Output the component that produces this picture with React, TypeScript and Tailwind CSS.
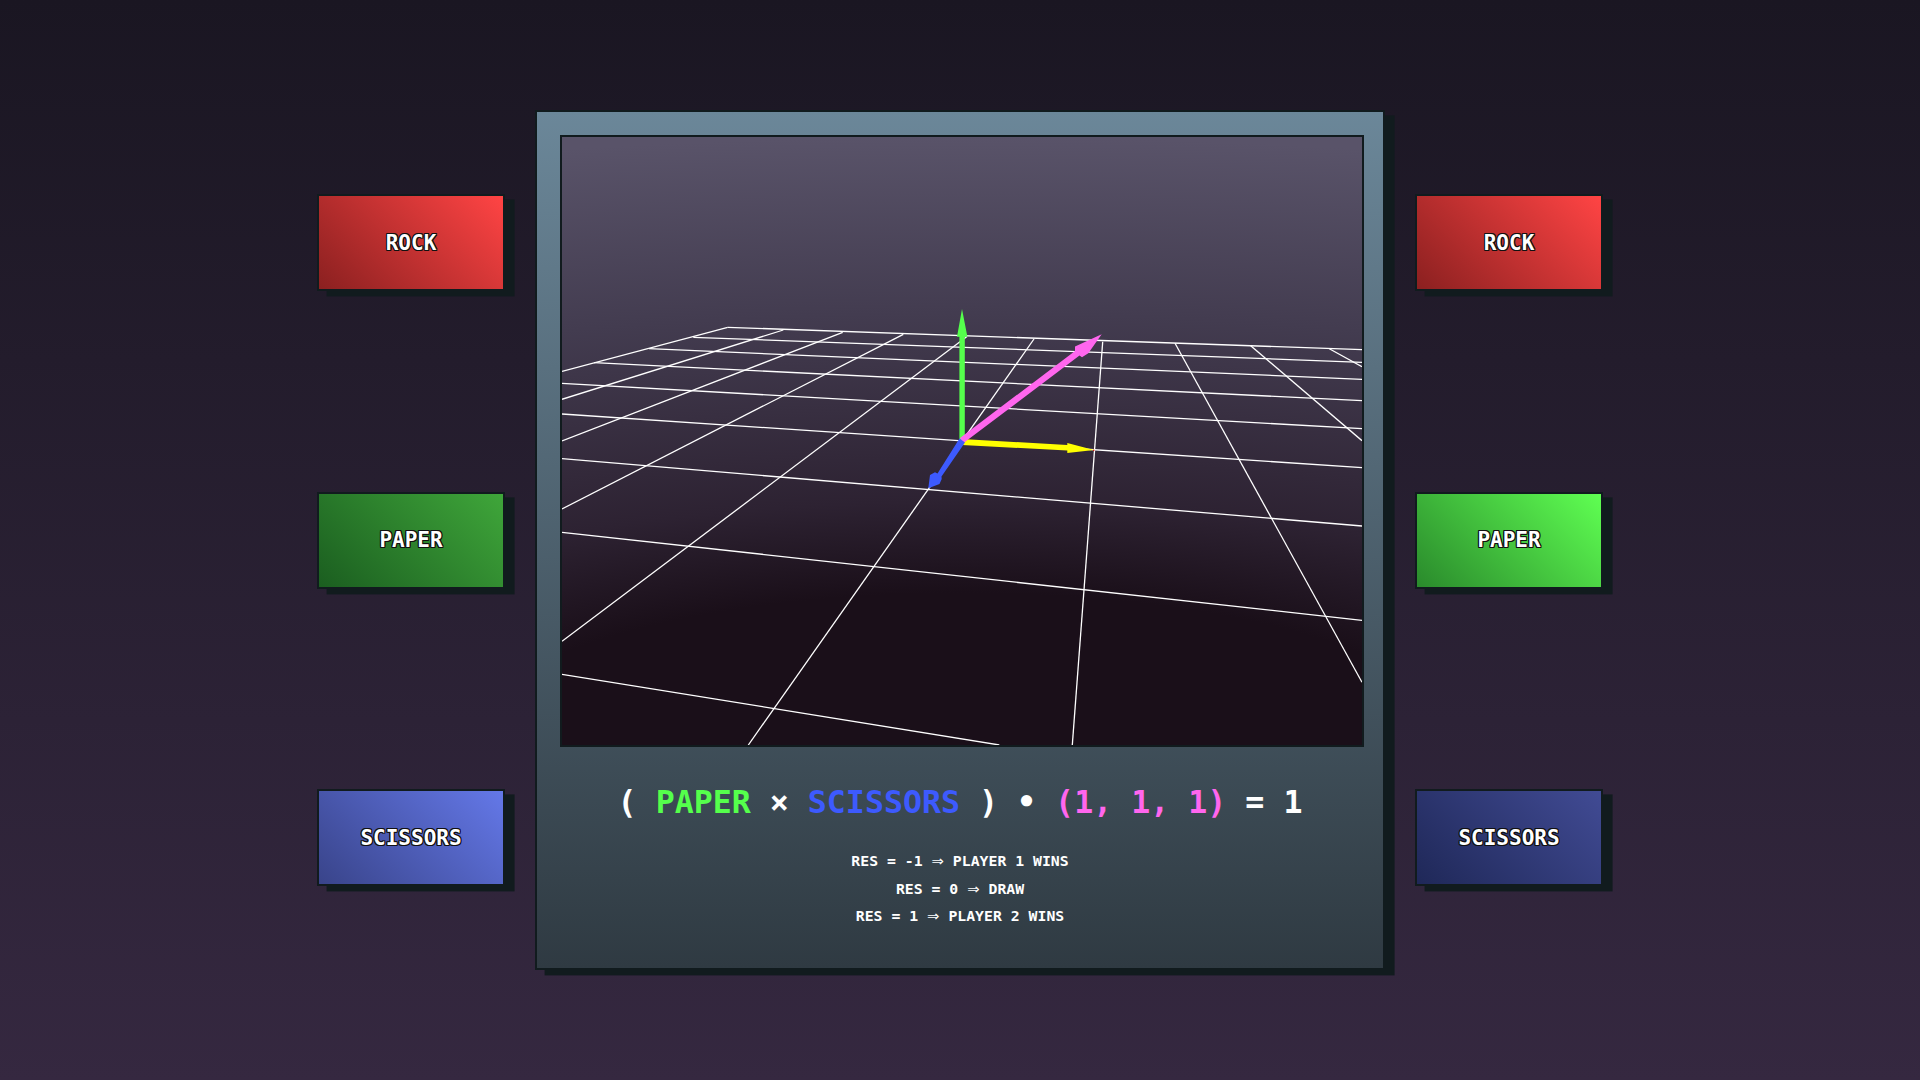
const mono = "font-['DejaVu_Sans_Mono','Liberation_Mono',monospace]"

// grid lines, in page pixels (the svg group below shifts them into the canvas)
const gridLines = [
  [727.7, 327.3, 1362, 349.7],
  [693.3, 337.3, 1362, 362.3],
  [649, 348.7, 1362, 379.3],
  [594, 362.7, 1362, 400.7],
  [562, 383.3, 1362, 428.7],
  [562, 414, 1362, 467.7],
  [562, 458.7, 1362, 526],
  [562, 532.3, 1362, 620.3],
  [562, 674.3, 999.3, 745],
  [727.7, 327.3, 562, 371.3],
  [783.3, 330, 562, 399.3],
  [842.7, 332.3, 562, 441],
  [903.3, 334.3, 562, 509],
  [967, 336.5, 562, 641.3],
  [1034, 339, 748.3, 745],
  [1102.7, 341.7, 1072.3, 745],
  [1175, 343.3, 1362, 682.3],
  [1250.7, 345.7, 1362, 440.7],
  [1329.3, 348.7, 1362, 366.7],
]

function Scene() {
  return (
    <svg className="block w-full h-full" viewBox="0 0 800 608">
      <g transform="translate(-562 -137)">
        {gridLines.map((l, i) => (
          <line key={i} x1={l[0]} y1={l[1]} x2={l[2]} y2={l[3]} stroke="#ffffff" strokeWidth="1.3" />
        ))}
        <rect x="1093" y="449.6" width="1.4" height="1.4" fill="#d01010" />
        {/* yellow */}
        <polygon points="962,439 1067.3,445 1067.3,443 1094,450 1067.3,453 1067.3,450.5 962,445" fill="#ffff00" />
        {/* green */}
        <polygon points="959.4,440 959.4,336.7 957,336.7 962,309 967.4,336.7 964.8,336.7 964.8,440" fill="#55ff4c" />
        {/* magenta */}
        <polygon points="960,438 1075,351 1075,346.5 1101.7,334.3 1088.3,353.3 1082,357.3 1079.5,355.5 963.5,443" fill="#ff66ee" />
        {/* blue */}
        <polygon points="959.5,438.5 965,442.5 941.5,476.5 941.7,479 939.5,484 928.3,488.3 930,475 935,472.3 937.5,473.5" fill="#3d5afe" />
      </g>
    </svg>
  )
}

function MoveButton(props: any) {
  return (
    <div className={`w-[188px] h-[97px] pt-[2px] border-2 border-[#111b1e] shadow-[9.6px_5.4px_0_#111b1e] flex items-center justify-center text-white text-[21px] font-bold ${mono} [text-shadow:1px_0_0_#111,-1px_0_0_#111,0_1px_0_#111,0_-1px_0_#111,1px_1px_0_#111,-1px_-1px_0_#111,1px_-1px_0_#111,-1px_1px_0_#111] ${props.color}`}>
      {props.label}
    </div>
  )
}

function ResLine(props: any) {
  return (
    <div>
      {props.left} <span className="font-['DejaVu_Sans',sans-serif] font-normal">⇒</span> {props.right}
    </div>
  )
}

export default function App() {
  return (
    <div className="w-full h-[1080px] overflow-hidden flex items-center justify-center bg-[linear-gradient(180deg,#1a1622,#352840)]">
      <div className="h-[692px] flex flex-col justify-between">
        <MoveButton label="ROCK" color="bg-[linear-gradient(45deg,#8b2020,#ff4444)]" />
        <MoveButton label="PAPER" color="bg-[linear-gradient(45deg,#1b5e20,#3fa63a)]" />
        <MoveButton label="SCISSORS" color="bg-[linear-gradient(45deg,#39448a,#6478e8)]" />
      </div>

      <div className={`w-[850px] h-[860px] mx-[30px] border-2 border-[#111b1e] shadow-[9.6px_5.4px_0_#111b1e] bg-[linear-gradient(180deg,#6b8799,#2f3a42)] pt-[23px] flex flex-col items-center text-white ${mono}`}>
        <div className="w-[804px] h-[612px] shrink-0 self-start ml-[23px] border-2 border-[#111b1e] bg-[radial-gradient(ellipse_2000px_608px_at_50%_100%,#1a0f19_25%,#2d2232_40%,#433c50_71%,#595369_100%)]">
          <Scene />
        </div>
        <div className="mt-[31px] h-[48px] leading-[48px] text-[31.6px] font-bold whitespace-pre">
          ( <span className="text-[#55ff4c]">PAPER</span> × <span className="text-[#3d5afe]">SCISSORS</span> ) • <span className="text-[#ff66ee]">(1, 1, 1)</span> = 1
        </div>
        <div className="mt-[21px] text-[14.8px] font-bold leading-[27.5px] text-center text-white">
          <ResLine left="RES = -1" right="PLAYER 1 WINS" />
          <ResLine left="RES = 0" right="DRAW" />
          <ResLine left="RES = 1" right="PLAYER 2 WINS" />
        </div>
      </div>

      <div className="h-[692px] flex flex-col justify-between">
        <MoveButton label="ROCK" color="bg-[linear-gradient(45deg,#8b2020,#ff4444)]" />
        <MoveButton label="PAPER" color="bg-[linear-gradient(45deg,#2a8a2c,#5fff52)]" />
        <MoveButton label="SCISSORS" color="bg-[linear-gradient(45deg,#1f2858,#414b94)]" />
      </div>
    </div>
  )
}
